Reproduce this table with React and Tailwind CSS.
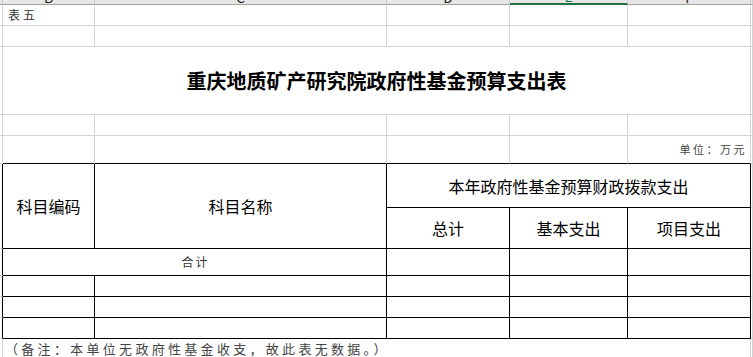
const font = { fontFamily: '"Noto Sans CJK SC", "Liberation Sans", sans-serif' };

const gray = 'border-r border-b border-[#d4d4d4]';
const black = 'border-r border-b border-black';

const Head = ({ label, active }) => (
  <div
    className={`flex justify-center items-end overflow-hidden bg-[#e6e6e6] border-r border-r-[#cfcfcf] ${
      active ? 'border-b-2 border-b-[#217346] text-[#217346]' : 'border-b border-b-[#a0a0a0] text-[#222]'
    }`}
  >
    <span className="text-[14px] leading-[14px]">{label}</span>
  </div>
);

const Cell = ({ className = gray, children }) => <div className={className}>{children}</div>;

export default function App() {
  const letters = ['', 'B', 'C', 'D', 'E', 'F', ''];
  const emptyRow = (k) => letters.map((_, i) => <Cell key={`${k}-${i}`} />);

  return (
    <div className="h-[357px] w-[753px] overflow-hidden bg-white" style={font}>
      <div className="grid h-full grid-cols-[3px_92px_292px_123px_118px_123px_1fr] grid-rows-[5px_21px_21px_68px_21px_28px_44px_41px_27px_21px_21px_21px_1fr]">
        {/* column headers, cut off at the top */}
        {letters.map((l, i) => (
          <Head key={`h-${i}`} label={l} active={l === 'E'} />
        ))}

        {/* 表五 */}
        <Cell />
        <div className={`${gray} flex items-center pl-[5px] text-[12px] tracking-[3px] text-[#333]`}>表五</div>
        <Cell />
        <Cell />
        <Cell />
        <Cell />
        <Cell />

        {emptyRow('r2')}

        {/* title */}
        <Cell />
        <div className={`${gray} col-span-5 flex items-center justify-center text-[20px] font-bold text-black`}>
          重庆地质矿产研究院政府性基金预算支出表
        </div>
        <Cell />

        {emptyRow('r4')}

        {/* unit row */}
        <Cell />
        <Cell className="border-r border-r-[#d4d4d4] border-b border-b-black" />
        <Cell className="border-r border-r-[#d4d4d4] border-b border-b-black" />
        <Cell className="border-r border-r-[#d4d4d4] border-b border-b-black" />
        <Cell className="border-r border-r-[#d4d4d4] border-b border-b-black" />
        <div className="border-r border-r-[#d4d4d4] border-b border-b-black flex items-center justify-end pr-[3px] text-[11px] tracking-[2.5px] text-[#444]">
          单位：万元
        </div>
        <Cell />

        {/* table header */}
        <Cell className="row-span-2 border-r border-r-black border-b border-b-[#d4d4d4]" />
        <div className={`${black} row-span-2 flex items-center justify-center text-[16px] text-black`}>科目编码</div>
        <div className={`${black} row-span-2 flex items-center justify-center text-[16px] text-black`}>科目名称</div>
        <div className={`${black} col-span-3 flex items-center justify-center text-[16px] text-black`}>
          本年政府性基金预算财政拨款支出
        </div>
        <Cell />
        <div className={`${black} flex items-center justify-center text-[16px] text-black`}>总计</div>
        <div className={`${black} flex items-center justify-center text-[16px] text-black`}>基本支出</div>
        <div className={`${black} flex items-center justify-center text-[16px] text-black`}>项目支出</div>
        <Cell />

        {/* 合计 */}
        <Cell className="border-r border-r-black border-b border-b-[#d4d4d4]" />
        <div className={`${black} col-span-2 flex items-center justify-center pl-[2px] text-[12px] tracking-[2px] text-[#333]`}>
          合计
        </div>
        <Cell className={black} />
        <Cell className={black} />
        <Cell className={black} />
        <Cell />

        {/* empty body rows */}
        {[0, 1, 2].map((r) => (
          <div key={`b-${r}`} className="contents">
            <Cell className="border-r border-r-black border-b border-b-[#d4d4d4]" />
            <Cell className={black} />
            <Cell className={black} />
            <Cell className={black} />
            <Cell className={black} />
            <Cell className={black} />
            <Cell />
          </div>
        ))}

        {/* note */}
        <Cell />
        <div className="col-span-5 border-r border-[#d4d4d4] flex items-center whitespace-nowrap pl-[2px] text-[13px] tracking-[3.3px] text-[#444]">
          （备注：本单位无政府性基金收支，故此表无数据。）
        </div>
        <Cell />
      </div>
    </div>
  );
}
